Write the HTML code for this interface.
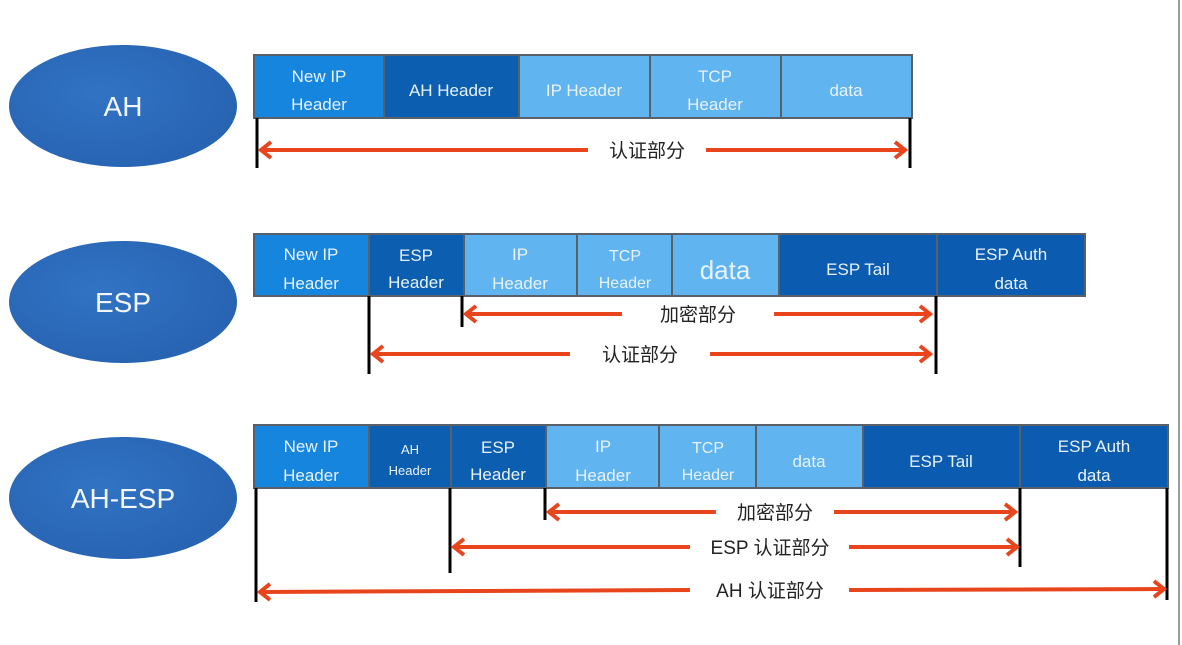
<!DOCTYPE html>
<html><head><meta charset="utf-8"><style>
html,body{margin:0;padding:0;background:#fff;width:1182px;height:645px;overflow:hidden}
svg{display:block}
text{font-family:"Liberation Sans","Noto Sans CJK SC",sans-serif;}
.w{fill:#e8f2fb;font-size:17px;text-anchor:middle}
.s{fill:#e8f2fb;font-size:13px;text-anchor:middle}
.l{fill:#222;font-size:19px;text-anchor:middle}
.e{fill:#f2f6fb;font-size:28px;text-anchor:middle}
</style></head><body>
<svg width="1182" height="645" viewBox="0 0 1182 645">
<defs>
<radialGradient id="g" cx="0.4" cy="0.4" r="0.7"><stop offset="0" stop-color="#3273c4"/><stop offset="1" stop-color="#2662b0"/></radialGradient>
<marker id="a" markerWidth="16" markerHeight="20" refX="12" refY="10" orient="auto-start-reverse" markerUnits="userSpaceOnUse"><path d="M2,2 L12,10 L2,18" fill="none" stroke="#e8451c" stroke-width="4"/></marker>
</defs>
<rect x="1178" y="0" width="2" height="645" fill="#9a9a9a"/>
<ellipse cx="123" cy="106" rx="114" ry="61" fill="url(#g)"/>
<text class="e" x="123" y="116">AH</text>
<ellipse cx="123" cy="302" rx="114" ry="61" fill="url(#g)"/>
<text class="e" x="123" y="312">ESP</text>
<ellipse cx="123" cy="498" rx="114" ry="61" fill="url(#g)"/>
<text class="e" x="123" y="508">AH-ESP</text>

<g stroke="#5a6068" stroke-width="2">
<rect x="254" y="55" width="130" height="63" fill="#1585de"/>
<rect x="384" y="55" width="135" height="63" fill="#0b5eb0"/>
<rect x="519" y="55" width="131" height="63" fill="#60b5f1"/>
<rect x="650" y="55" width="131" height="63" fill="#60b5f1"/>
<rect x="781" y="55" width="131" height="63" fill="#60b5f1"/>
<rect x="254" y="234" width="115" height="62" fill="#1585de"/>
<rect x="369" y="234" width="95" height="62" fill="#0b5eb0"/>
<rect x="464" y="234" width="113" height="62" fill="#60b5f1"/>
<rect x="577" y="234" width="95" height="62" fill="#60b5f1"/>
<rect x="672" y="234" width="107" height="62" fill="#60b5f1"/>
<rect x="779" y="234" width="158" height="62" fill="#0b5cb0"/>
<rect x="937" y="234" width="148" height="62" fill="#0b5cb0"/>
<rect x="254" y="425" width="115" height="63" fill="#1585de"/>
<rect x="369" y="425" width="82" height="63" fill="#0b5eb0"/>
<rect x="451" y="425" width="95" height="63" fill="#0b5eb0"/>
<rect x="546" y="425" width="113" height="63" fill="#60b5f1"/>
<rect x="659" y="425" width="97" height="63" fill="#60b5f1"/>
<rect x="756" y="425" width="107" height="63" fill="#60b5f1"/>
<rect x="863" y="425" width="157" height="63" fill="#0b5cb0"/>
<rect x="1020" y="425" width="148" height="63" fill="#0b5cb0"/>
</g>

<text class="w" x="319" y="82">New IP</text><text class="w" x="319" y="110">Header</text>
<text class="w" x="451" y="96">AH Header</text>
<text class="w" x="584" y="96">IP Header</text>
<text class="w" x="715" y="82">TCP</text><text class="w" x="715" y="110">Header</text>
<text class="w" x="846" y="96">data</text>
<text class="w" x="311" y="260">New IP</text><text class="w" x="311" y="289">Header</text>
<text class="w" x="416" y="261">ESP</text><text class="w" x="416" y="288">Header</text>
<text class="w" x="520" y="260">IP</text><text class="w" x="520" y="289">Header</text>
<text class="w" x="625" y="261" style="font-size:16px">TCP</text><text class="w" x="625" y="288" style="font-size:16px">Header</text>
<text class="w" x="725" y="279" style="font-size:26px">data</text>
<text class="w" x="858" y="275">ESP Tail</text>
<text class="w" x="1011" y="260">ESP Auth</text><text class="w" x="1011" y="289">data</text>
<text class="w" x="311" y="452">New IP</text><text class="w" x="311" y="481">Header</text>
<text class="s" x="410" y="454">AH</text><text class="s" x="410" y="475">Header</text>
<text class="w" x="498" y="453">ESP</text><text class="w" x="498" y="480">Header</text>
<text class="w" x="603" y="452">IP</text><text class="w" x="603" y="481">Header</text>
<text class="w" x="708" y="453" style="font-size:16px">TCP</text><text class="w" x="708" y="480" style="font-size:16px">Header</text>
<text class="w" x="809" y="467">data</text>
<text class="w" x="941" y="467">ESP Tail</text>
<text class="w" x="1094" y="452">ESP Auth</text><text class="w" x="1094" y="481">data</text>

<g stroke="#000" stroke-width="3">
<line x1="257" y1="118" x2="257" y2="168"/>
<line x1="910" y1="118" x2="910" y2="168"/>
<line x1="369" y1="296" x2="369" y2="374"/>
<line x1="462" y1="296" x2="462" y2="327"/>
<line x1="936" y1="296" x2="936" y2="374"/>
<line x1="256" y1="488" x2="256" y2="602"/>
<line x1="450" y1="488" x2="450" y2="573"/>
<line x1="545" y1="488" x2="545" y2="520"/>
<line x1="1020" y1="488" x2="1020" y2="567"/>
<line x1="1167" y1="488" x2="1167" y2="600"/>
</g>

<g stroke="#e8451c" stroke-width="4" fill="none">
<line x1="261" y1="150" x2="588" y2="150" marker-start="url(#a)"/>
<line x1="706" y1="150" x2="905" y2="150" marker-end="url(#a)"/>
<line x1="466" y1="314" x2="622" y2="314" marker-start="url(#a)"/>
<line x1="774" y1="314" x2="930" y2="314" marker-end="url(#a)"/>
<line x1="373" y1="354" x2="570" y2="354" marker-start="url(#a)"/>
<line x1="710" y1="354" x2="930" y2="354" marker-end="url(#a)"/>
<line x1="549" y1="512" x2="716" y2="512" marker-start="url(#a)"/>
<line x1="834" y1="512" x2="1015" y2="512" marker-end="url(#a)"/>
<line x1="454" y1="547" x2="690" y2="547" marker-start="url(#a)"/>
<line x1="849" y1="547" x2="1017" y2="547" marker-end="url(#a)"/>
<line x1="260" y1="592" x2="690" y2="590" marker-start="url(#a)"/>
<line x1="849" y1="590" x2="1164" y2="589" marker-end="url(#a)"/>
</g>
<text class="l" x="647" y="157">认证部分</text>
<text class="l" x="698" y="321">加密部分</text>
<text class="l" x="640" y="361">认证部分</text>
<text class="l" x="775" y="519">加密部分</text>
<text class="l" x="770" y="554">ESP 认证部分</text>
<text class="l" x="770" y="597">AH 认证部分</text>
</svg>
</body></html>
